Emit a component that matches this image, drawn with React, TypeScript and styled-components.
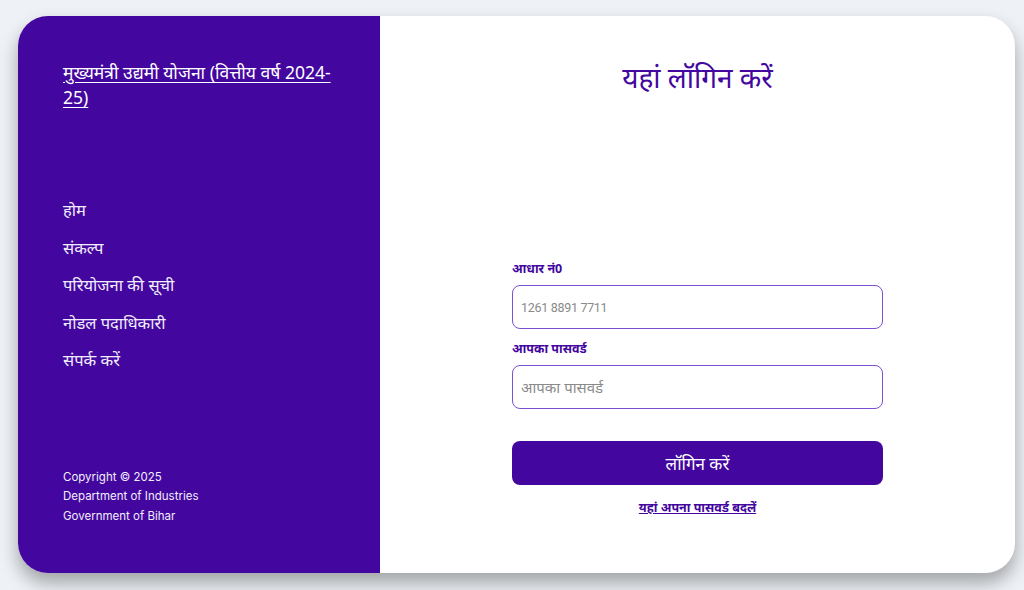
import { createGlobalStyle } from "styled-components";
import styled from "styled-components";

const PURPLE = "#43069f";

const GlobalStyle = createGlobalStyle`
  html, body {
    margin: 0;
    padding: 0;
    background: #eef1f5;
    font-family: 'Noto Sans', 'Inter', sans-serif;
  }
  * { box-sizing: border-box; }
`;

const Page = styled.div`
  width: 1024px;
  height: 590px;
  padding: 16px 9px 17px 18px;
`;

const Card = styled.div`
  display: flex;
  height: 100%;
  border-radius: 30px;
  overflow: hidden;
  background: #ffffff;
  box-shadow: 0 10px 18px rgba(0, 0, 0, 0.32);
`;

// Left side
const Sidebar = styled.aside`
  width: 362px;
  flex-shrink: 0;
  background: ${PURPLE};
  color: #ffffff;
  padding: 44px 40px 47px 45px;
  display: flex;
  flex-direction: column;
`;

const Title = styled.a`
  color: #ffffff;
  font-size: 17.5px;
  line-height: 25px;
  text-decoration: underline;
  text-underline-offset: 3px;
`;

const Nav = styled.nav`
  display: flex;
  flex-direction: column;
  gap: 11.5px;
  margin-top: 87px;
`;

const NavLink = styled.a`
  color: #f0ecfa;
  font-size: 16.5px;
  line-height: 26px;
  text-decoration: none;
`;

const Footer = styled.div`
  margin-top: auto;
  font-family: 'Inter', 'Noto Sans', sans-serif;
  font-size: 11.5px;
  line-height: 19.5px;
  color: #f2eefb;
`;

// Right side
const Main = styled.main`
  flex: 1;
  display: flex;
  flex-direction: column;
  align-items: center;
  padding-top: 41px;
`;

const Heading = styled.h2`
  margin: 0;
  color: ${PURPLE};
  font-size: 28px;
  font-weight: 400;
  line-height: 40px;
`;

const Form = styled.form`
  width: 371px;
  margin-top: 163px;
  display: flex;
  flex-direction: column;
`;

const Label = styled.label`
  color: ${PURPLE};
  font-size: 12.5px;
  font-weight: 700;
  line-height: 18px;
  margin-bottom: 7px;
`;

const Input = styled.input<{ $digits?: boolean }>`
  height: 44px;
  width: 100%;
  border: 1px solid #7b4fd1;
  border-radius: 8px;
  padding: 0 8px;
  font-family: ${({ $digits }) => ($digits ? "'Roboto', sans-serif" : "inherit")};
  font-size: ${({ $digits }) => ($digits ? "12.5px" : "15px")};
  letter-spacing: ${({ $digits }) => ($digits ? "-0.3px" : "0")};
  color: #333;
  margin-bottom: 11px;
  outline: none;

  &::placeholder { color: #8a8a8a; }
`;

const Button = styled.button`
  margin-top: 21px;
  height: 44px;
  width: 100%;
  border: none;
  border-radius: 8px;
  background: ${PURPLE};
  color: #ffffff;
  font-family: inherit;
  font-size: 17px;
  cursor: pointer;
`;

const ChangeLink = styled.a`
  margin-top: 14px;
  align-self: center;
  color: ${PURPLE};
  font-size: 12.5px;
  font-weight: 700;
  text-decoration: underline;
`;

const navItems = ["होम", "संकल्प", "परियोजना की सूची", "नोडल पदाधिकारी", "संपर्क करें"];

export default function App() {
  return (
    <>
      <GlobalStyle />
      <Page>
        <Card>
          <Sidebar>
            <Title href="#">मुख्यमंत्री उद्यमी योजना (वित्तीय वर्ष 2024-25)</Title>
            <Nav>
              {navItems.map((item) => (
                <NavLink key={item} href="#">{item}</NavLink>
              ))}
            </Nav>
            <Footer>
              Copyright © 2025
              <br />
              Department of Industries
              <br />
              Government of Bihar
            </Footer>
          </Sidebar>
          <Main>
            <Heading>यहां लॉगिन करें</Heading>
            <Form onSubmit={(e) => e.preventDefault()}>
              <Label>आधार नं0</Label>
              <Input $digits placeholder="1261 8891 7711" />
              <Label>आपका पासवर्ड</Label>
              <Input type="password" placeholder="आपका पासवर्ड" />
              <Button type="submit">लॉगिन करें</Button>
              <ChangeLink href="#">यहां अपना पासवर्ड बदलें</ChangeLink>
            </Form>
          </Main>
        </Card>
      </Page>
    </>
  );
}
